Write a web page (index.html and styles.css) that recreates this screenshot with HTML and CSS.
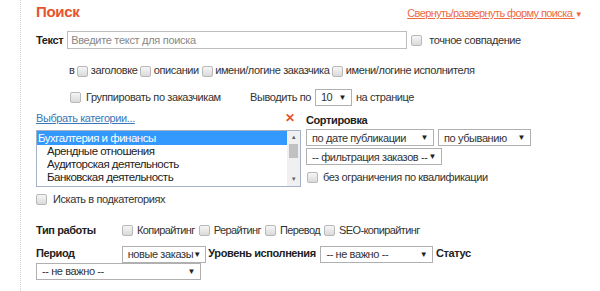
FILE: index.html
```html
<!DOCTYPE html>
<html lang="ru">
<head>
    <meta charset="UTF-8">
    <title>Поиск заказов</title>
    <link rel="stylesheet" href="styles.css">
</head>
<body>
    <div class="search-form">
        <div class="search-head">
            <h1>Поиск</h1>
            <a href="#" class="toggle-link">Свернуть/развернуть форму поиска <span class="tri">▼</span></a>
        </div>

        <div class="row row-text">
            <b class="label">Текст</b>
            <input type="text" class="text-input" placeholder="Введите текст для поиска">
            <span class="check"></span>
            <span class="check-label">точное совпадение</span>
        </div>

        <div class="row row-in">
            в <span class="check"></span> заголовке <span class="check"></span> описании <span class="check"></span> имени/логине заказчика <span class="check"></span> имени/логине исполнителя
        </div>

        <div class="row row-group">
            <span class="check"></span>
            <span class="group-label">Группировать по заказчикам</span>
            <span>Выводить по</span>
            <span class="select sel-count">10 <span class="arrow">▼</span></span>
            <span>на странице</span>
        </div>

        <div class="columns">
            <div class="col-left">
                <div class="cat-head">
                    <a href="#" class="cat-link">Выбрать категории...</a>
                    <span class="clear">✕</span>
                </div>
                <div class="listbox">
                    <div class="list-items">
                        <div class="item selected">Бухгалтерия и финансы</div>
                        <div class="item sub">Арендные отношения</div>
                        <div class="item sub">Аудиторская деятельность</div>
                        <div class="item sub">Банковская деятельность</div>
                    </div>
                    <div class="scrollbar">
                        <span class="sb-up">▲</span>
                        <span class="sb-thumb"></span>
                        <span class="sb-down">▼</span>
                    </div>
                </div>
                <div class="row row-sub">
                    <span class="check"></span>
                    <span class="check-label">Искать в подкатегориях</span>
                </div>
            </div>
            <div class="col-right">
                <b class="sort-title">Сортировка</b>
                <div class="sort-line">
                    <span class="select sel-date">по дате публикации <span class="arrow">▼</span></span>
                    <span class="select sel-order">по убыванию <span class="arrow">▼</span></span>
                </div>
                <div class="sort-line">
                    <span class="select sel-filter">-- фильтрация заказов -- <span class="arrow">▼</span></span>
                </div>
                <div class="row row-qual">
                    <span class="check"></span>
                    <span class="check-label">без ограничения по квалификации</span>
                </div>
            </div>
        </div>

        <div class="row row-type">
            <b class="label wide">Тип работы</b>
            <span class="check"></span> Копирайтинг <span class="check"></span> Рерайтинг <span class="check"></span> Перевод <span class="check"></span> SEO-копирайтинг
        </div>

        <div class="row-period">
            <b class="label wide">Период</b>
            <span class="select sel-period">новые заказы <span class="arrow">▼</span></span>
            <b class="label">Уровень исполнения</b>
            <span class="select sel-level">-- не важно -- <span class="arrow">▼</span></span>
            <b class="label">Статус</b>
            <span class="select sel-status">-- не важно -- <span class="arrow">▼</span></span>
        </div>
    </div>
</body>
</html>
```

FILE: styles.css
```css
* {
    margin: 0;
    padding: 0;
    box-sizing: border-box;
}
body {
    font-family: 'Liberation Sans', Arial, sans-serif;
    font-size: 11px;
    letter-spacing: -0.4px;
    color: #333;
    background: white;
}
.search-form {
    margin-left: 20px;
    width: 570px;
    min-height: 291px;
    border-left: 1px dotted #d0d0d0;
    padding-left: 15px;
    padding-right: 10px;
}
.search-head {
    display: flex;
    justify-content: space-between;
    align-items: baseline;
    height: 26px;
    padding-top: 3px;
}
.search-head h1 {
    font-size: 15px;
    letter-spacing: -0.3px;
    color: #e8532b;
    font-weight: bold;
}
.toggle-link {
    color: #ef6a3f;
    letter-spacing: -0.6px;
    margin-right: -2px;
}
.toggle-link .tri {
    font-size: 8px;
    display: inline-block;
}
.row {
    display: flex;
    align-items: center;
    gap: 4px;
}
.label {
    color: #222;
}
.check {
    display: inline-block;
    flex-shrink: 0;
    width: 11px;
    height: 11px;
    border: 1px solid #b8b8b8;
    border-radius: 2px;
    background: linear-gradient(#f6f6f6, #dadada);
    vertical-align: middle;
}
.row-text {
    margin-top: 5px;
    height: 18px;
}
.text-input {
    width: 340px;
    height: 18px;
    border: 1px solid #bdbdbd;
    padding: 0 3px;
    font-family: inherit;
    font-size: 11px;
    letter-spacing: -0.3px;
    color: #333;
}
.text-input::placeholder {
    color: #888;
}
.row-text .check-label {
    margin-left: 3px;
}
.row-in {
    display: block;
    padding-left: 33px;
    margin-top: 14px;
    height: 14px;
    line-height: 14px;
}
.row-group {
    margin-top: 11px;
    height: 18px;
    padding-left: 34px;
}
.group-label {
    margin-left: 1px;
    width: 160px;
}
.select {
    display: inline-flex;
    flex-shrink: 0;
    align-items: center;
    justify-content: space-between;
    height: 17px;
    border: 1px solid #b0b0b0;
    background: white;
    padding: 0 5px;
    color: #333;
    white-space: nowrap;
}
.select .arrow {
    font-size: 8px;
    color: #222;
}
.sel-count {
    width: 37px;
}
.columns {
    display: flex;
    margin-top: 5px;
}
.col-left {
    width: 265px;
    flex-shrink: 0;
}
.cat-head {
    display: flex;
    justify-content: space-between;
    align-items: center;
    height: 13px;
    padding-right: 6px;
}
.cat-link {
    color: #3a78b5;
}
.clear {
    color: #e8532b;
    font-size: 12px;
    font-weight: bold;
}
.listbox {
    display: flex;
    margin-top: 6px;
    height: 57px;
    border: 1px solid #a5b1c4;
    overflow: hidden;
}
.list-items {
    flex: 1;
    font-size: 11.5px;
    letter-spacing: -0.5px;
    color: #222;
}
.item {
    height: 13px;
    line-height: 13px;
    padding-left: 1px;
    white-space: nowrap;
}
.item.sub {
    padding-left: 10px;
}
.item.selected {
    background: #3399ff;
    color: white;
    height: 14px;
    line-height: 14px;
}
.scrollbar {
    width: 13px;
    background: #f0f0f0;
    display: flex;
    flex-direction: column;
    align-items: center;
}
.sb-up, .sb-down {
    font-size: 6px;
    color: #606060;
    height: 13px;
    line-height: 13px;
}
.sb-thumb {
    width: 9px;
    height: 14px;
    background: #c1c1c1;
}
.sb-down {
    margin-top: auto;
}
.row-sub {
    margin-top: 5px;
    height: 14px;
    gap: 6px;
}
.col-right {
    flex: 1;
    margin-left: 5px;
    padding-top: 3px;
}
.sort-title {
    display: block;
    color: #222;
    height: 14px;
}
.sort-line {
    display: flex;
    gap: 4px;
    margin-top: 1px;
}
.sort-line + .sort-line {
    margin-top: 2px;
}
.sel-date {
    width: 128px;
}
.sel-order {
    width: 93px;
}
.sel-filter {
    width: 136px;
}
.row-qual {
    margin-top: 6px;
    gap: 5px;
    padding-left: 1px;
}
.row-type {
    margin-top: 17px;
    height: 14px;
    letter-spacing: -0.6px;
}
.row-type .label {
    letter-spacing: -0.4px;
}
.wide {
    display: inline-block;
    width: 83px;
}
.row-type .wide {
    width: 82px;
}
.row-period {
    margin-top: 8px;
    line-height: 17px;
}
.row-period .select {
    vertical-align: middle;
}
.row-period .sel-level {
    margin-left: 2px;
}
.sel-period {
    width: 84px;
}
.sel-level {
    width: 113px;
}
.sel-status {
    width: 165px;
}
```
